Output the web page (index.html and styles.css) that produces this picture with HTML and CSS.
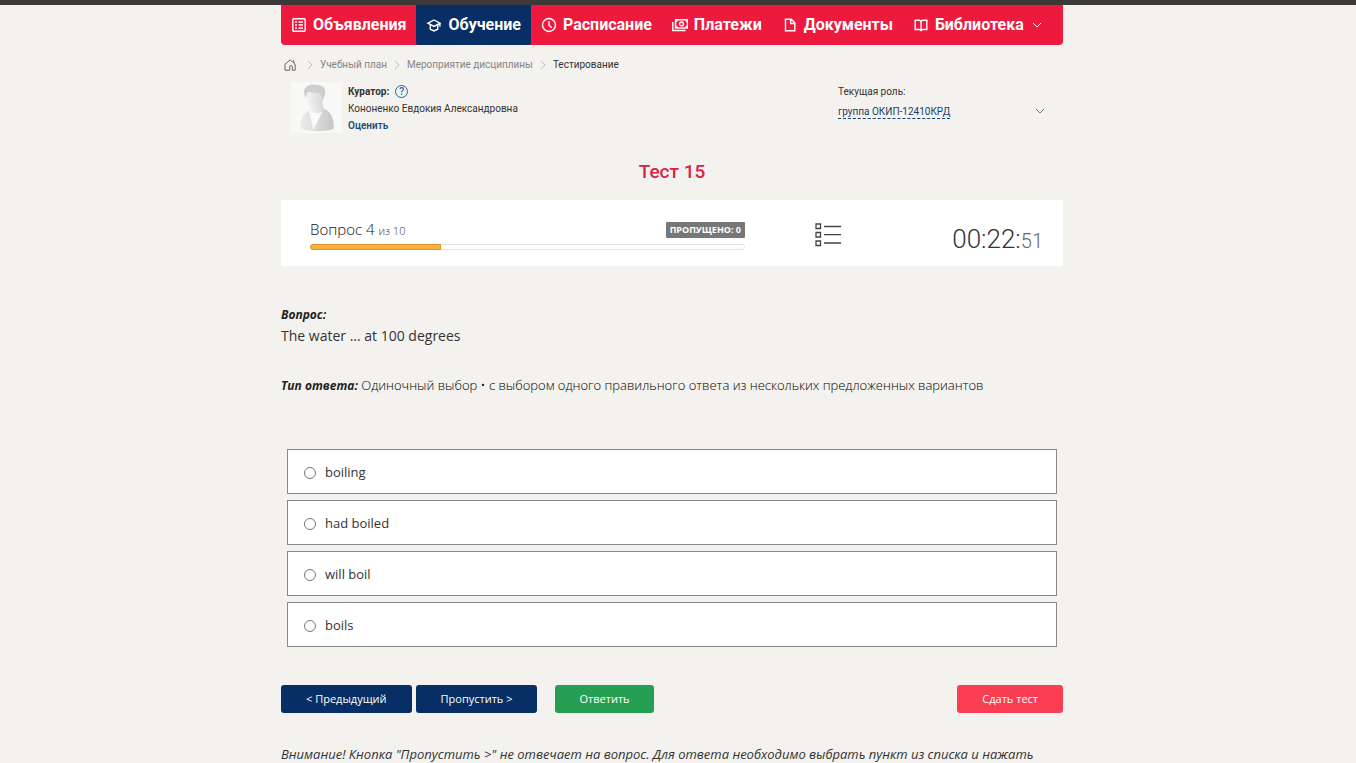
FILE: index.html
```html
<!DOCTYPE html>
<html lang="ru">
<head>
<meta charset="utf-8">
<meta name="viewport" content="width=device-width, initial-scale=1">
<title>Тест 15</title>
<link rel="stylesheet" href="styles.css">
</head>
<body>
<div class="page">
  <nav class="menu" aria-label="Главное меню">
    <a class="menu-item" href="#"><svg class="icon" viewBox="0 0 16 16"><rect x="1.8" y="1.8" width="12.4" height="12.4" rx="1"/><path d="M4 5h2M7.5 5H12M4 8h2M7.5 8H12M4 11h2M7.5 11H12"/></svg>Объявления</a>
    <a class="menu-item menu-item-active" href="#"><svg class="icon" viewBox="0 0 16 16"><path d="M2 6.200 8 3l6 3.200-6 3.200zM13.900 6.200v3.500M4.300 8v4.200L8 14l3.700-1.800V8"/></svg>Обучение</a>
    <a class="menu-item" href="#"><svg class="icon" viewBox="0 0 16 16"><circle cx="8" cy="8" r="6.500"/><path d="M8 4v4.200l2.700 2.500"/></svg>Расписание</a>
    <a class="menu-item" href="#"><svg class="icon" viewBox="0 0 16 16"><rect x="3.500" y="2.800" width="12" height="8.200"/><circle cx="9.500" cy="6.900" r="1.900"/><path d="M.8 5v8.500h12.700M3.500 5.200l2-2.200M13.400 3l2 2M3.500 8.700l2 2M13.400 10.800l2-2"/></svg>Платежи</a>
    <a class="menu-item" href="#"><svg class="icon" viewBox="0 0 16 16"><path d="M3.500 2.200h5.700l3.600 3.600v8H3.500zM8.600 2.500v4h4"/></svg>Документы</a>
    <a class="menu-item" href="#"><svg class="icon" viewBox="0 0 16 16"><path d="M2.200 3.200h4.300L8 4.300l1.500-1.100h4.300v9.300H9.500L8 13.700l-1.500-1.200H2.200zM8 4.300v9.200"/></svg>Библиотека<svg class="chevron" viewBox="0 0 10 10"><path d="m1 3 4 4 4-4"/></svg></a>
  </nav>

  <nav class="crumbs" aria-label="Навигация">
    <a class="crumb-home" href="#" aria-label="Главная"><svg viewBox="0 0 12 12"><path d="M1 5.200 6.200 1l5 4.200v6H8.300V7.600c0-1.300-2.600-1.300-2.600 0v3.600H1zM9.700 1.200v2.600"/></svg></a>
    <svg class="crumb-sep" viewBox="0 0 6 10"><path d="m1 1 4 4-4 4"/></svg>
    <a class="crumb" href="#">Учебный план</a>
    <svg class="crumb-sep" viewBox="0 0 6 10"><path d="m1 1 4 4-4 4"/></svg>
    <a class="crumb" href="#">Мероприятие дисциплины</a>
    <svg class="crumb-sep" viewBox="0 0 6 10"><path d="m1 1 4 4-4 4"/></svg>
    <span class="crumb crumb-current">Тестирование</span>
  </nav>

  <header class="info">
    <svg class="avatar" viewBox="0 0 48 48" role="img" aria-label="Куратор">
      <defs>
        <linearGradient id="coat" x1="0" x2="1"><stop offset="0" stop-color="#ededed"/><stop offset="1" stop-color="#c6c6c6"/></linearGradient>
        <linearGradient id="skin" x1="0" x2="1"><stop offset="0" stop-color="#f5f5f5"/><stop offset="1" stop-color="#d6d6d6"/></linearGradient>
      </defs>
      <rect width="48" height="48" fill="#f8f8f7"/>
      <path fill="url(#coat)" d="M9 44c-1-6 1-13 6-16l5-3h11c7 3 10 11 9 19-5 3-25 3-31 0z"/>
      <path fill="#fafafa" d="m17 27 4 18 9-18z"/>
      <path fill="url(#skin)" d="M18 20h12l1 7c-3 3-10 3-13 0z"/>
      <path fill="url(#skin)" d="M14 10c1-9 17-9 17 1 0 7-3 14-8 14s-9-8-9-15z"/>
      <path fill="#cecece" d="M12 10c0-7 8-9 14-7 5 0 7 4 6 9l-2 5-2-7c-6 1-10-2-13 0l-1 5z"/>
    </svg>
    <div class="curator">
      <div class="curator-title">Куратор: <a class="help" href="#" aria-label="Справка">?</a></div>
      <div class="curator-name">Кононенко Евдокия Александровна</div>
      <a class="rate" href="#">Оценить</a>
    </div>
    <div class="role">
      <div class="role-label">Текущая роль:</div>
      <button class="role-button" type="button"><span class="role-name">группа ОКИП-12410КРД</span><svg class="role-chevron" viewBox="0 0 10 10"><path d="m1 3 4 4 4-4"/></svg></button>
    </div>
  </header>

  <main>
    <h1 class="title">Тест 15</h1>

    <section class="status">
      <div class="progress">
        <div class="progress-head">
          <div class="progress-text">Вопрос 4 <small class="progress-total">из 10</small></div>
          <span class="skipped">ПРОПУЩЕНО: 0</span>
        </div>
        <div class="bar"><div class="bar-fill"></div></div>
      </div>
      <button class="list-button" type="button" aria-label="Список вопросов"><svg class="list-icon" viewBox="0 0 26 24"><path d="M1 1h4.500v4.500H1zM1 9.500h4.500V14H1zM1 18h4.500v4.500H1zM9 3.500h17M9 11.700h17M9 20h17"/></svg></button>
      <div class="timer">00:22:<span class="seconds">51</span></div>
    </section>

    <section class="question">
      <div class="question-label">Вопрос:</div>
      <p class="question-text">The water ... at 100 degrees</p>
      <p class="answer-type"><b class="answer-type-label">Тип ответа:</b> Одиночный выбор • с выбором одного правильного ответа из нескольких предложенных вариантов</p>
    </section>

    <form class="form">
      <div class="options">
        <label class="option"><input class="radio" type="radio" name="answer">boiling</label>
        <label class="option"><input class="radio" type="radio" name="answer">had boiled</label>
        <label class="option"><input class="radio" type="radio" name="answer">will boil</label>
        <label class="option"><input class="radio" type="radio" name="answer">boils</label>
      </div>
      <div class="actions">
        <button class="button" type="button">&lt; Предыдущий</button>
        <button class="button" type="button">Пропустить &gt;</button>
        <button class="button button-answer" type="button">Ответить</button>
        <button class="button button-finish" type="button">Сдать тест</button>
      </div>
    </form>
    <p class="note">Внимание! Кнопка "Пропустить &gt;" не отвечает на вопрос. Для ответа необходимо выбрать пункт из списка и нажать</p>
  </main>
</div>
</body>
</html>
```
FILE: styles.css
```css
* { box-sizing: border-box; }

body {
  margin: 0;
  padding-right: 12px;
  border-top: 5px solid #3b3a39;
  background: #f3f2ee;
  color: #333;
  font: 14px/20px "Open Sans", "Noto Sans", sans-serif;
}

a { color: inherit; text-decoration: none; }
p { margin: 0; }
svg { flex: none; fill: none; stroke: currentColor; }
button { font: inherit; cursor: pointer; }

.page { max-width: 782px; margin: 0 auto; }

.menu {
  display: flex;
  height: 40px;
  border-radius: 0 0 4px 4px;
  background: #ed1a3d;
  color: #fff;
  font-family: Roboto, "Open Sans", sans-serif;
  font-size: 16px;
  font-weight: 700;
}
.menu-item { display: flex; align-items: center; gap: 6px; padding: 0 10px; white-space: nowrap; }
.menu-item-active { border-radius: 0 0 2px 2px; background: #072f66; }
.icon { width: 16px; height: 16px; stroke-width: 1.4; }
.chevron { width: 10px; height: 10px; margin-left: 2px; }

.crumbs {
  display: flex;
  align-items: center;
  gap: 7px;
  padding: 10px 3px 0;
  color: #858585;
  font-family: Roboto, "Open Sans", sans-serif;
  font-size: 10px;
}
.crumb-home { display: flex; margin-right: 4px; color: #666; }
.crumb-home svg { width: 12px; height: 12px; }
.crumb-sep { width: 6px; height: 10px; stroke: #bbb; }
.crumb-current { color: #333; }

.info { display: flex; padding: 7px 10px 0; font-family: Roboto, "Open Sans", sans-serif; font-size: 10px; line-height: 17px; }
.avatar { width: 51px; height: 51px; stroke: none; }
.curator { flex: 1; padding: 1px 0 0 6px; }
.curator-title { display: flex; align-items: center; gap: 6px; font-weight: 700; }
.help {
  width: 13px;
  height: 13px;
  border: 1px solid #2a6496;
  border-radius: 50%;
  color: #2a6496;
  font-weight: 500;
  line-height: 11px;
  text-align: center;
}
.rate { color: #1d4f7c; font-weight: 600; }
.role { width: 215px; padding-top: 1px; }
.role-label { margin-bottom: 6px; }
.role-button {
  display: flex;
  align-items: flex-start;
  justify-content: space-between;
  width: 100%;
  padding: 0 8px 0 0;
  border: 0;
  background: none;
  color: #16406c;
  line-height: 12px;
}
.role-name { border-bottom: 1px dashed #16406c; }
.role-chevron { width: 10px; height: 10px; color: #777; }

.title {
  margin: 26px 0 16px;
  color: #d9234a;
  font-family: Roboto, "Open Sans", sans-serif;
  font-size: 19px;
  font-weight: 500;
  line-height: 24px;
  text-align: center;
}

.status {
  display: flex;
  align-items: center;
  height: 66px;
  padding: 0 20px 0 29px;
  background: #fff;
}
.progress { flex: 1; }
.progress-head { display: flex; align-items: center; justify-content: space-between; height: 27px; }
.progress-text { color: #111; font-size: 15px; font-weight: 300; }
.progress-total { color: #333; font-size: 11px; }
.skipped {
  padding: 0 4px;
  border-radius: 1px;
  background: #777;
  color: #fff;
  font-size: 9px;
  font-weight: 700;
  line-height: 16px;
}
.bar { height: 6px; border: 1px solid #e2e2e2; border-radius: 3px; }
.bar-fill { width: 30.2%; height: 6px; margin: -1px; border: 1px solid #dc9425; border-radius: 3px 0 0 3px; background: #fbb040; }
.list-button { display: flex; margin: 4px 70px 0; padding: 0; border: 0; background: none; color: #444; }
.list-icon { width: 26px; height: 24px; stroke-width: 1.3; }
.timer { width: 132px; padding-top: 13px; color: #333; font-family: Roboto, "Open Sans", sans-serif; font-size: 26px; font-weight: 300; line-height: 26px; text-align: right; }
.seconds { color: #666; font-size: 20px; }

.question { padding-top: 39px; }
.question-label { color: #222; font-size: 12px; font-style: italic; font-weight: 700; }
.question-text { padding: 1px 0 29px; }
.answer-type { color: #000; font-size: 13px; font-weight: 300; }
.answer-type-label { color: #222; font-size: 12px; font-style: italic; font-weight: 700; }

.options { display: flex; flex-direction: column; gap: 6px; padding: 53px 6px 38px; }
.option {
  display: flex;
  align-items: center;
  gap: 9px;
  height: 45px;
  padding: 0 16px;
  border: 1px solid #888;
  background: #fff;
  font-size: 13px;
}
.radio { width: 12px; height: 12px; margin: 2px 0 0; appearance: none; border: 1px solid #777; border-radius: 50%; background: #fff; }
.radio:checked { background: radial-gradient(#072f66 40%, #fff 50%); }

.actions { display: flex; gap: 4px; }
.button {
  height: 28px;
  padding: 0 25px;
  border: 0;
  border-radius: 3px;
  background: #072f66;
  color: #fff;
  font-size: 11px;
}
.button-answer { margin-left: 14px; padding: 0 24px; background: #25a052; }
.button-finish { margin-left: auto; background: #f93e54; }
.note { padding-top: 32px; font-size: 13px; font-style: italic; line-height: 19px; white-space: nowrap; }
```
